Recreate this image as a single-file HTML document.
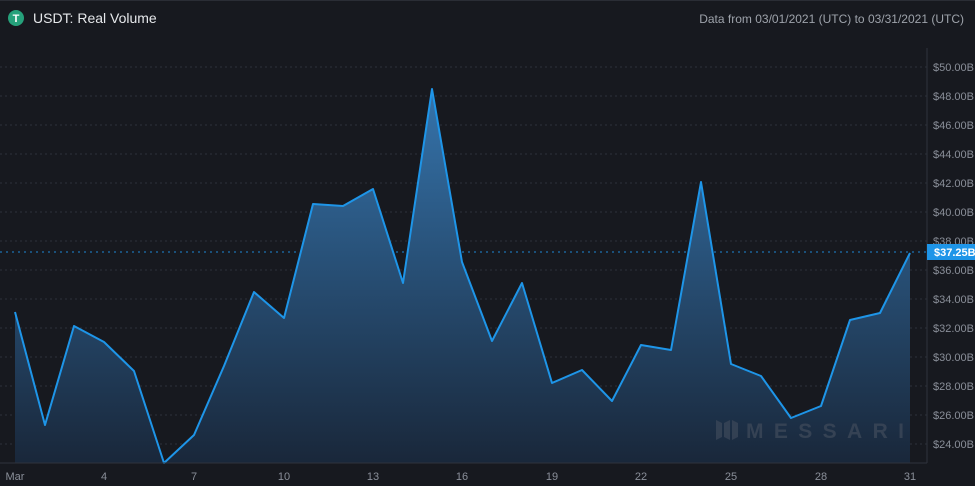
<!DOCTYPE html><html><head><style>
body{margin:0;background:#17191f;width:975px;height:486px;overflow:hidden;font-family:"Liberation Sans",sans-serif;}
</style></head><body>
<svg width="975" height="486" xmlns="http://www.w3.org/2000/svg" style="position:absolute;left:0;top:0">
<defs><linearGradient id="g" x1="0" y1="89" x2="0" y2="463" gradientUnits="userSpaceOnUse">
<stop offset="0" stop-color="#3574ac"/><stop offset="1" stop-color="#19273a"/></linearGradient></defs>
<rect width="975" height="486" fill="#17191f"/>
<rect x="0" y="0" width="975" height="1" fill="#2a2d35"/>
<g stroke="#2c313b" stroke-dasharray="2,3" stroke-width="1">
<line x1="0" x2="927" y1="67" y2="67"/><line x1="0" x2="927" y1="96" y2="96"/><line x1="0" x2="927" y1="125" y2="125"/><line x1="0" x2="927" y1="154" y2="154"/><line x1="0" x2="927" y1="183" y2="183"/><line x1="0" x2="927" y1="212" y2="212"/><line x1="0" x2="927" y1="241" y2="241"/><line x1="0" x2="927" y1="270" y2="270"/><line x1="0" x2="927" y1="299" y2="299"/><line x1="0" x2="927" y1="328" y2="328"/><line x1="0" x2="927" y1="357" y2="357"/><line x1="0" x2="927" y1="386" y2="386"/><line x1="0" x2="927" y1="415" y2="415"/><line x1="0" x2="927" y1="444" y2="444"/>
</g>
<line x1="0" x2="927" y1="252" y2="252" stroke="#1e88d6" stroke-dasharray="2,4"/>
<polygon fill="url(#g)" points="15,463 15,312 45,425 74,326 104,342 134,371 164,463 194,435 224,366 254,292 284,318 313,204 343,206 373,189 403,283 432,89 462,262 492,341 522,283 552,383 582,370 612,401 641,345 671,350 701,182 731,364 761,376 791,418 821,406 850,320 880,313 910,253 910,463"/>
<polyline fill="none" stroke="#1e95e8" stroke-width="2" stroke-linejoin="round" points="15,312 45,425 74,326 104,342 134,371 164,463 194,435 224,366 254,292 284,318 313,204 343,206 373,189 403,283 432,89 462,262 492,341 522,283 552,383 582,370 612,401 641,345 671,350 701,182 731,364 761,376 791,418 821,406 850,320 880,313 910,253"/>
<line x1="927" x2="927" y1="48" y2="463" stroke="#2f333c"/>
<line x1="0" x2="927" y1="463" y2="463" stroke="#2f333c"/>
<g fill="#8a8f99" font-size="11">
<text x="933" y="71">$50.00B</text><text x="933" y="100">$48.00B</text><text x="933" y="129">$46.00B</text><text x="933" y="158">$44.00B</text><text x="933" y="187">$42.00B</text><text x="933" y="216">$40.00B</text><text x="933" y="245">$38.00B</text><text x="933" y="274">$36.00B</text><text x="933" y="303">$34.00B</text><text x="933" y="332">$32.00B</text><text x="933" y="361">$30.00B</text><text x="933" y="390">$28.00B</text><text x="933" y="419">$26.00B</text><text x="933" y="448">$24.00B</text>
</g>
<rect x="927" y="244" width="48" height="16" fill="#1e95e8"/>
<text x="934" y="256" fill="#fff" font-size="11" font-weight="bold">$37.25B</text>
<g fill="#8a8f99" font-size="11" text-anchor="middle">
<text x="15" y="480">Mar</text><text x="104" y="480">4</text><text x="194" y="480">7</text><text x="284" y="480">10</text><text x="373" y="480">13</text><text x="462" y="480">16</text><text x="552" y="480">19</text><text x="641" y="480">22</text><text x="731" y="480">25</text><text x="821" y="480">28</text><text x="910" y="480">31</text>
</g>
<g fill="#3a4657" opacity="0.8"><path d="M716 420 l6 3 v14 l-6 3z M724 423 l6 -3 v20 l-6 -3z M732 420 l6 3 v14 l-6 3z"/></g>
<text x="746" y="438" fill="#3a4657" font-size="21" font-weight="bold" textLength="158" lengthAdjust="spacing" opacity="0.85">MESSARI</text>
<circle cx="16" cy="18" r="8" fill="#26a17b"/>
<text x="16" y="22" fill="#fff" font-size="11" font-weight="bold" text-anchor="middle">T</text>
<text x="33" y="23" fill="#e6e8eb" font-size="14">USDT: Real Volume</text>
<text x="964" y="23" fill="#9ea3ab" font-size="12" text-anchor="end">Data from 03/01/2021 (UTC) to 03/31/2021 (UTC)</text>
</svg>
</body></html>
